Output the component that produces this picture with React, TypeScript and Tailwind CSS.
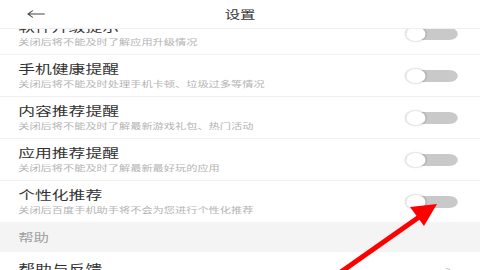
const rows = [
  { title: '软件升级提示', desc: '关闭后将不能及时了解应用升级情况' },
  { title: '手机健康提醒', desc: '关闭后将不能及时处理手机卡顿、垃圾过多等情况' },
  { title: '内容推荐提醒', desc: '关闭后将不能及时了解最新游戏礼包、热门活动' },
  { title: '应用推荐提醒', desc: '关闭后将不能及时了解最新最好玩的应用' },
  { title: '个性化推荐', desc: '关闭后百度手机助手将不会为您进行个性化推荐' },
]

function Toggle() {
  return (
    <div className="relative w-[37px] h-[12px]">
      <div className="h-full w-full rounded-full bg-[#c9c9c9]" />
      {/* thumb */}
      <div className="absolute left-0 top-[-1px] w-[14px] h-[14px] rounded-full bg-white shadow-[0_0_1px_1px_rgba(0,0,0,0.12)]" />
    </div>
  )
}

export default function App() {
  return (
    <div className="relative w-[480px] h-[270px] overflow-hidden bg-white font-['Noto_Sans_CJK_SC','Noto_Sans',sans-serif]">
      {/* screenshot is stretched horizontally */}
      <div className="w-[343px] h-[270px] origin-top-left scale-x-[1.4] flex flex-col">
        <header className="relative z-10 h-[29px] shrink-0 flex items-center border-b border-[#efefef] bg-white">
          <svg className="ml-[19px]" width="13" height="8" viewBox="0 0 13 8" fill="none" stroke="#444" strokeWidth="0.9">
            <path d="M13 4H1M4.5 0.5L1 4l3.5 3.5" />
          </svg>
          <h1 className="absolute left-0 right-0 text-center text-[11px] leading-none text-[#333]">设置</h1>
        </header>

        <div className="flex-1 overflow-hidden">
          <div className="-mt-[16px]">
            {rows.map((r, i) => (
              <div
                key={r.title}
                className={`flex items-center justify-between pl-[13px] pr-[16px] ${i < rows.length - 1 ? 'h-[42px] border-b border-[#f0f0f0]' : 'h-[41px]'}`}
              >
                <div className="flex flex-col gap-[3px]">
                  <span className="text-[12px] leading-[14px] text-[#333]">{r.title}</span>
                  <span className="text-[8px] leading-[10px] text-[#b3b3b3] whitespace-nowrap">{r.desc}</span>
                </div>
                <Toggle />
              </div>
            ))}

            <div className="h-[30px] bg-[#f4f4f4] flex items-center pl-[13px]">
              <span className="text-[11px] text-[#a0a0a0]">帮助</span>
            </div>

            <div className="h-[42px] flex items-start justify-between pl-[13px] pr-[21px] pt-[10px]">
              <span className="text-[12px] leading-[14px] text-[#333]">帮助与反馈</span>
              <span className="text-[7px] leading-[14px] text-[#bbb]">&gt;</span>
            </div>
          </div>
        </div>
      </div>

      {/* red annotation arrow */}
      <svg className="absolute inset-0 pointer-events-none" width="480" height="270" viewBox="0 0 480 270">
        <line x1="338" y1="274" x2="422" y2="215" stroke="#ff0000" strokeWidth="5" />
        <polygon points="437,204 424,226 410,207" fill="#ff0000" />
      </svg>
    </div>
  )
}
